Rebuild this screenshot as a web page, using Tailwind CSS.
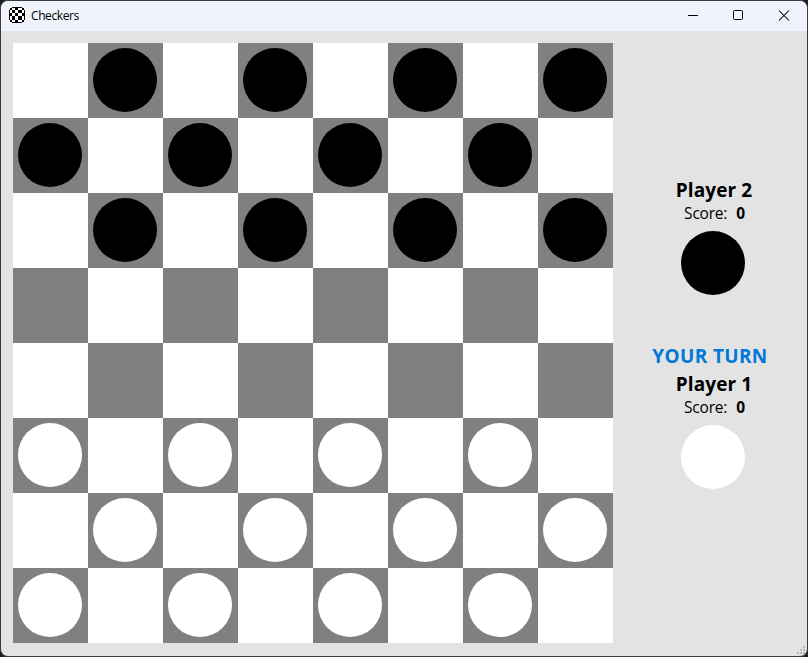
<!DOCTYPE html>
<html lang="en">
<head>
<meta charset="utf-8">
<title>Checkers</title>
<script src="https://cdn.jsdelivr.net/npm/@tailwindcss/browser@4"></script>
</head>
<body class="h-[657px] w-[808px] overflow-hidden bg-[#202020] font-['Segoe_UI','Open_Sans',sans-serif] text-black">
<div class="relative flex h-[657px] w-[808px] flex-col overflow-hidden rounded-lg border border-[#3c3c3c] bg-[#e3e3e3]">
  <header class="flex h-[30px] shrink-0 items-center bg-[#f0f3fb] pl-2">
    <svg class="mb-[2px] h-4 w-4" viewBox="0 0 16 16" shape-rendering="crispEdges">
      <path d="M3 0h10v1h2v2h1v10h-1v2h-2v1H3v-1H1v-2H0V3h1V1h2z" fill="#000"/>
      <path d="M3 1h3v2H3zM9 1h4v2H9zM1 3h2v3H1zM6 3h3v3H6zM13 3h2v3h-2zM3 6h3v3H3zM9 6h4v3H9zM1 9h2v4H1zM6 9h3v4H6zM13 9h2v4h-2zM3 13h3v2H3zM9 13h4v2H9z" fill="#fff"/>
    </svg>
    <span class="ml-1.5 text-[12px] leading-4 tracking-[-0.4px]">Checkers</span>
    <div class="ml-auto flex h-[29px] self-start">
      <div class="flex w-[46px] items-center justify-center"><svg class="h-[11px] w-[11px]" viewBox="0 0 11 11"><path d="M0 5.5h10" stroke="#000"/></svg></div>
      <div class="flex w-[45px] items-center justify-center"><svg class="h-[11px] w-[11px]" viewBox="0 0 11 11"><rect x=".5" y=".5" width="9" height="9" rx="1" fill="none" stroke="#000"/></svg></div>
      <div class="flex w-[46px] items-center justify-center"><svg class="h-[11px] w-[11px]" viewBox="0 0 11 11"><path d="M0 .5l10 10M10 .5l-10 10" stroke="#000" stroke-width="1.05"/></svg></div>
    </div>
  </header>
  <main class="flex flex-1 pl-3 pt-3">
    <div id="board" class="grid h-[600px] w-[600px] shrink-0 grid-cols-8 grid-rows-8"></div>
    <aside class="flex w-[194px] flex-col items-center pt-[133px]">
      <section class="flex flex-col items-center">
        <h2 class="ml-2 h-[27px] whitespace-nowrap text-[19px] font-bold leading-7 tracking-[0.1px]">Player 2</h2>
        <p class="ml-[9px] flex h-5 gap-[9px] text-[15.5px] leading-5 tracking-[-0.2px]"><span>Score:</span><b>0</b></p>
        <div class="ml-[6px] mt-[8px] h-16 w-16 rounded-full bg-black"></div>
      </section>
      <section class="mt-[47px] flex flex-col items-center">
        <h1 class="h-7 whitespace-nowrap text-[19px] font-bold leading-7 tracking-[0.35px] text-[#0078d7]">YOUR TURN</h1>
        <h2 class="ml-2 h-[27px] whitespace-nowrap text-[19px] font-bold leading-7 tracking-[0.1px]">Player 1</h2>
        <p class="ml-[9px] flex h-5 gap-[9px] text-[15.5px] leading-5 tracking-[-0.2px]"><span>Score:</span><b>0</b></p>
        <div class="ml-[6px] mt-[8px] h-16 w-16 rounded-full bg-white"></div>
      </section>
    </aside>
  </main>
  <svg class="absolute bottom-[2px] right-[2px] h-2 w-2" viewBox="0 0 8 8" fill="#b8b8b8" shape-rendering="crispEdges"><path d="M6 0h2v2H6zM3 3h2v2H3zM6 3h2v2H6zM0 6h2v2H0zM3 6h2v2H3zM6 6h2v2H6z"/></svg>
</div>
<script>
  const board = document.getElementById('board');
  for (let row = 0; row < 8; row++) {
    for (let col = 0; col < 8; col++) {
      const square = document.createElement('div');
      const dark = (row + col) % 2 === 1;
      square.className = dark ? 'bg-[#808080] p-[5px]' : 'bg-white';
      if (dark && (row < 3 || row > 4)) {
        const piece = document.createElement('div');
        piece.className = row < 3 ? 'h-16 w-16 rounded-full bg-black' : 'h-16 w-16 rounded-full bg-white';
        square.append(piece);
      }
      board.append(square);
    }
  }
</script>
</body>
</html>
